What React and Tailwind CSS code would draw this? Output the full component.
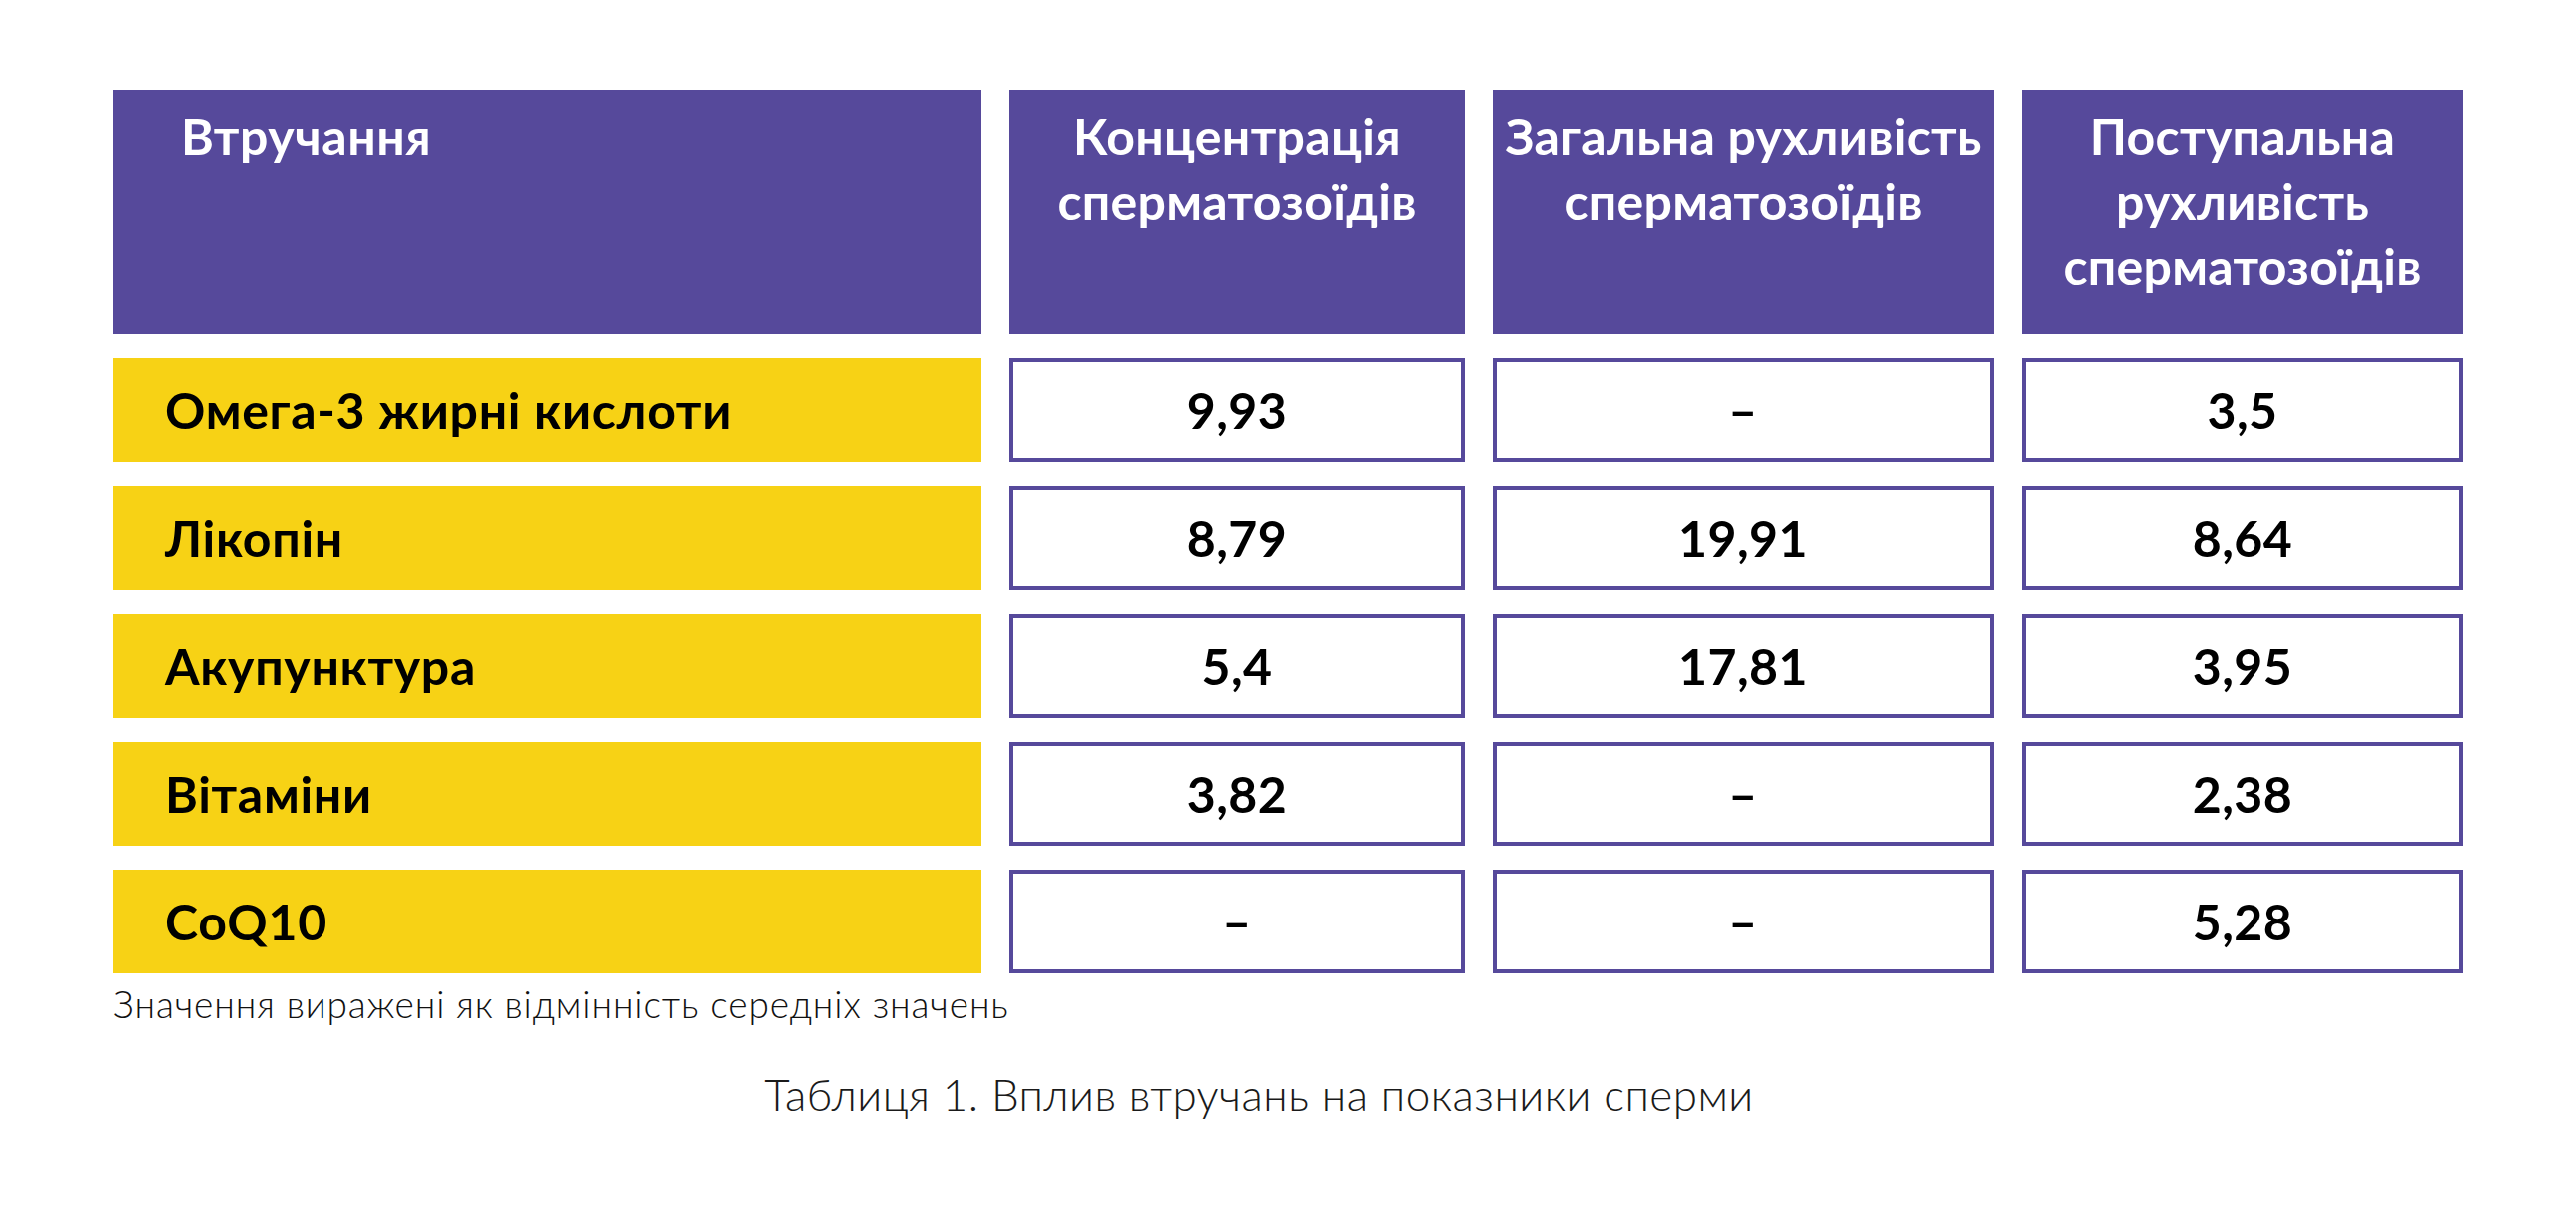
import React from "react";

const font = { fontFamily: "Lato, 'Open Sans', 'Noto Sans', sans-serif" };

const headers = [
  ["Концентрація", "сперматозоїдів"],
  ["Загальна рухливість", "сперматозоїдів"],
  ["Поступальна", "рухливість", "сперматозоїдів"],
];

const rows = [
  { name: "Омега-3 жирні кислоти", values: ["9,93", "–", "3,5"] },
  { name: "Лікопін", values: ["8,79", "19,91", "8,64"] },
  { name: "Акупунктура", values: ["5,4", "17,81", "3,95"] },
  { name: "Вітаміни", values: ["3,82", "–", "2,38"] },
  { name: "CoQ10", values: ["–", "–", "5,28"] },
];

const HeaderCell = ({ lines }) => (
  <div className="h-[245px] bg-[#56499b] pt-[14px] text-center text-[50px] leading-[65px] font-bold tracking-[0.3px] text-white whitespace-nowrap">
    {lines.map((line) => (
      <div key={line}>{line}</div>
    ))}
  </div>
);

const App = () => {
  return (
    <div className="w-[2580px] h-[1228px] bg-white" style={font}>
      <div className="pt-[90px] pl-[113px]">
        <div className="grid grid-cols-[870px_456px_502px_442px] gap-x-[28px] gap-y-[24px]">
          {/* Header row */}
          <div className="h-[245px] bg-[#56499b] pt-[14px] pl-[68px] text-[50px] leading-[65px] font-bold tracking-[0.6px] text-white">
            Втручання
          </div>
          {headers.map((lines, i) => (
            <HeaderCell key={i} lines={lines} />
          ))}

          {/* Body rows */}
          {rows.map((row) => (
            <React.Fragment key={row.name}>
              <div className="h-[104px] bg-[#f7d215] pl-[52px] flex items-center text-[50px] font-bold tracking-[0.7px] text-black">
                {row.name}
              </div>
              {row.values.map((value, i) => (
                <div
                  key={i}
                  className="h-[104px] border-4 border-[#56499b] bg-white flex items-center justify-center text-[50px] font-bold tracking-[0.5px] text-black"
                >
                  {value}
                </div>
              ))}
            </React.Fragment>
          ))}
        </div>

        <p className="mt-[3px] text-[37px] font-light tracking-[0.9px] text-[#111]">
          Значення виражені як відмінність середніх значень
        </p>
      </div>

      <p className="mt-[29px] pr-[58px] text-center text-[44px] font-light tracking-[0.45px] text-[#1a1a1a]">
        Таблиця 1. Вплив втручань на показники сперми
      </p>
    </div>
  );
};

export default App;
